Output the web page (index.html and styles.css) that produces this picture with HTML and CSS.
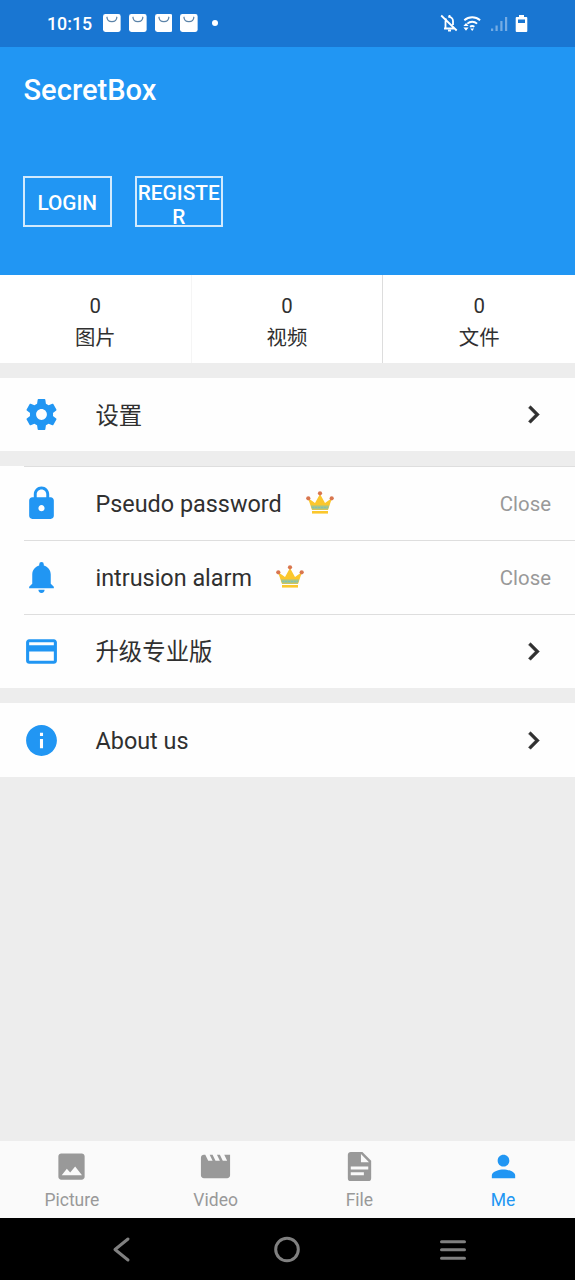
FILE: index.html
```html
<!DOCTYPE html>
<html lang="zh-CN">
<head>
<meta charset="utf-8">
<title>SecretBox</title>
<link rel="stylesheet" href="styles.css">
</head>
<body>
<svg class="defs" width="0" height="0" aria-hidden="true">
  <symbol id="bag" viewBox="0 0 18 18"><rect width="18" height="18" rx="2.500" fill="#fff"/><path d="M4 3.200c.5 6 9.500 6 10 0" fill="none" stroke="#5b83a8" stroke-width="1.300" stroke-linecap="round"/></symbol>
  <symbol id="chevron" viewBox="0 0 24 24"><path d="M8.590 16.580L13.170 12 8.590 7.410 10 6l6 6-6 6z"/></symbol>
  <symbol id="crown" viewBox="0 0 28 24"><path d="M2 7l7 5 5-9 5 9 7-5-4 12H6z" fill="#fbc72c"/><path d="M4.800 14.500h18.400l-1.400 4H6.200z" fill="#a6c48a"/><path d="M6 16.500h16" stroke="#7fc0b4" stroke-width="1.200" stroke-dasharray="2 1"/><path d="M6 20h16v2.600H6z" fill="#fbc72c"/><g fill="#d9764f"><circle cx="2.300" cy="7.300" r="2.100"/><circle cx="14" cy="2.300" r="2.100"/><circle cx="25.700" cy="7.300" r="2.100"/></g></symbol>
</svg>
<div class="screen">
  <div class="status">
    <span class="clock">10:15</span>
    <div class="notices">
      <svg><use href="#bag"/></svg><svg><use href="#bag"/></svg><svg><use href="#bag"/></svg><svg><use href="#bag"/></svg>
    </div>
    <span class="dot"></span>
    <svg class="system" width="90" height="22" viewBox="0 0 90 22">
      <g fill="none" stroke="#fff" stroke-width="1.800">
        <path d="M5 16.500h11M6.500 16V9.500a4 4 0 0 1 1-2.800M9.300 5a4 4 0 0 1 4.700 4v4M10.500 3v2M9 18.700h3M2.200 3.500l15.500 15"/>
        <path d="M25.300 8.200a12 12 0 0 1 15.800 0M28.300 11.600a7.500 7.500 0 0 1 9.800 0M31 14.700a4 4 0 0 1 4.400 0" stroke-width="1.900"/>
      </g>
      <g fill="#fff"><path d="M31.300 16.600h3.800l-1.900 2.300zM24.400 14l2.600-3 2.600 3zM24.400 15.600h5.200L27 18.800z"/><path d="M80 3h5v2h2.300q1 0 1 1v13q0 1-1 1h-9.600q-1 0-1-1V6q0-1 1-1H80zM79 7.500V11h7V7.500z" fill-rule="evenodd"/></g>
      <g fill="#fff" opacity=".4"><path d="M52 16.500h2.200V19H52zM56.500 13.500h2.200V19h-2.200zM61.300 9h2.200v10h-2.200zM66 5h2.200v14H66z"/></g>
    </svg>
  </div>
  <header class="hero">
    <h1>SecretBox</h1>
    <div class="auth"><button>LOGIN</button><button>REGISTER</button></div>
  </header>
  <section class="stats">
    <div><span>0</span><span>图片</span></div>
    <div><span>0</span><span>视频</span></div>
    <div><span>0</span><span>文件</span></div>
  </section>
  <section class="group settings">
    <div class="row">
      <svg class="icon" viewBox="0 0 24 24"><path d="M19.430 12.980c.040-.320.070-.640.070-.980s-.030-.660-.070-.980l2.110-1.650c.190-.150.240-.420.120-.640l-2-3.460c-.120-.220-.390-.300-.610-.220l-2.490 1c-.520-.400-1.080-.730-1.690-.980l-.380-2.650C14.460 2.180 14.250 2 14 2h-4c-.250 0-.460.180-.490.420l-.380 2.650c-.610.250-1.170.590-1.690.980l-2.490-1c-.230-.090-.490 0-.610.220l-2 3.460c-.130.220-.070.490.120.640l2.110 1.650c-.040.320-.070.650-.070.980s.030.660.070.980l-2.110 1.650c-.190.150-.240.420-.120.640l2 3.460c.120.220.390.300.610.220l2.490-1c.520.400 1.080.730 1.690.980l.380 2.650c.030.240.240.420.490.420h4c.250 0 .460-.180.490-.420l.380-2.650c.610-.250 1.170-.590 1.690-.980l2.490 1c.230.090.490 0 .610-.220l2-3.460c.120-.220.070-.490-.120-.640zM12 15.500c-1.930 0-3.500-1.570-3.500-3.500s1.570-3.500 3.500-3.500 3.500 1.570 3.500 3.500-1.570 3.500-3.500 3.500z"/></svg>
      <span class="label">设置</span><svg class="more"><use href="#chevron"/></svg>
    </div>
  </section>
  <section class="group security">
    <div class="row">
      <svg class="icon" viewBox="0 0 24 24"><path d="M18 8h-1V6c0-2.760-2.240-5-5-5S7 3.240 7 6v2H6c-1.100 0-2 .9-2 2v10c0 1.100.9 2 2 2h12c1.100 0 2-.9 2-2V10c0-1.100-.9-2-2-2zm-6 9c-1.100 0-2-.9-2-2s.9-2 2-2 2 .9 2 2-.9 2-2 2zm3.100-9H8.900V6c0-1.710 1.390-3.100 3.100-3.100s3.100 1.390 3.100 3.100z"/></svg>
      <span class="label">Pseudo password</span><svg class="crown"><use href="#crown"/></svg><span class="state">Close</span>
    </div>
    <div class="row">
      <svg class="icon" viewBox="0 0 24 24"><path d="M14 20a2 2 0 0 1-4 0zM12 2a1.500 1.500 0 0 0-1.500 1.500v.7C7.900 4.900 6 7.200 6 10v6l-2 2v1h16v-1l-2-2v-6c0-2.800-1.900-5.100-4.500-5.800v-.7A1.500 1.500 0 0 0 12 2z"/></svg>
      <span class="label">intrusion alarm</span><svg class="crown"><use href="#crown"/></svg><span class="state">Close</span>
    </div>
    <div class="row">
      <svg class="icon" viewBox="0 0 24 24"><path d="M20 4H4c-1.110 0-2 .89-2 2v12c0 1.110.89 2 2 2h16c1.110 0 2-.89 2-2V6c0-1.110-.89-2-2-2zm0 14H4v-6h16zm0-10H4V6h16z"/></svg>
      <span class="label">升级专业版</span><svg class="more"><use href="#chevron"/></svg>
    </div>
  </section>
  <section class="group">
    <div class="row">
      <svg class="icon" viewBox="0 0 24 24"><path d="M12 2C6.480 2 2 6.480 2 12s4.480 10 10 10 10-4.480 10-10S17.520 2 12 2zm1 15h-2v-6h2zm0-8h-2V7h2z"/></svg>
      <span class="label">About us</span><svg class="more"><use href="#chevron"/></svg>
    </div>
  </section>
  <nav class="tabs">
    <a><svg viewBox="0 0 24 24"><path d="M21 19V5c0-1.100-.9-2-2-2H5c-1.100 0-2 .9-2 2v14c0 1.100.9 2 2 2h14c1.100 0 2-.9 2-2zM5.300 18l3.500-4.500 2.300 2.600L14.500 12l4.700 6z"/></svg><span>Picture</span></a>
    <a><svg viewBox="0 0 24 24"><path d="M18 4l2 4h-3l-2-4h-2l2 4h-3l-2-4H8l2 4H7L5 4H4c-1.100 0-1.990.9-1.990 2L2 18c0 1.100.9 2 2 2h16c1.100 0 2-.9 2-2V4z"/></svg><span>Video</span></a>
    <a><svg viewBox="0 0 24 24"><path d="M13 9h5.500L13 3.500zM6 2h8l6 6v12a2 2 0 0 1-2 2H6a2 2 0 0 1-2-2V4c0-1.110.89-2 2-2zm9 16v-2H6v2zm3-4v-2H6v2z" fill-rule="evenodd"/></svg><span>File</span></a>
    <a class="active"><svg viewBox="0 0 24 24"><path d="M12 12c2.210 0 4-1.790 4-4s-1.790-4-4-4-4 1.790-4 4 1.790 4 4 4zm0 2c-2.670 0-8 1.340-8 4v2h16v-2c0-2.660-5.330-4-8-4z"/></svg><span>Me</span></a>
  </nav>
  <div class="navigation">
    <svg viewBox="0 0 30 30"><path d="M21 5L8 15.500 21 26"/></svg>
    <svg viewBox="0 0 30 30"><circle cx="15" cy="15.500" r="11.300"/></svg>
    <svg viewBox="0 0 30 30"><path d="M3.500 7.700h23M3.500 15.800h23M3.500 24.200h23"/></svg>
  </div>
</div>
</body>
</html>
```
FILE: styles.css
```css
* { box-sizing: border-box; }
body { margin: 0; font-family: Roboto, "Noto Sans CJK SC", sans-serif; color: #303030; }
svg { display: block; flex: none; }
.defs { position: absolute; }
.screen { display: flex; flex-direction: column; width: 575px; height: 1280px; background: #ededed; overflow: hidden; }

.status { display: flex; align-items: center; height: 47px; padding: 0 46px 1px 47px; background: #1976d2; color: #fff; flex: none; }
.clock { width: 56px; font-size: 17.800px; font-weight: 500; line-height: 20px; padding-top: 2px; }
.notices { display: flex; gap: 8px; }
.notices svg { width: 17.800px; height: 18px; }
.dot { width: 6px; height: 6px; margin-left: 14px; border-radius: 50%; background: #fff; }
.system { margin-left: auto; }

.hero { height: 228px; padding: 25px 24px 0 23px; background: #2196f3; color: #fff; flex: none; }
h1 { height: 36px; margin: 0; padding-left: .5px; font-size: 29.100px; font-weight: 500; line-height: 36px; }
.auth { display: flex; gap: 23px; margin-top: 68px; }
.auth button { width: 88.500px; height: 51px; padding: 3px 0 0; border: 2px solid rgba(255, 255, 255, .8); background: none; color: #fff; font: 500 20.800px/24px Roboto, sans-serif; overflow-wrap: anywhere; }

.stats { display: grid; grid-template-columns: repeat(3, 1fr); height: 88px; background: #fff; flex: none; }
.stats div { display: flex; flex-direction: column; align-items: center; padding-top: 19px; border-right: 1px solid #f5f5f5; font-size: 20.400px; }
.stats div:nth-child(2) { border-right-color: #ddd; }
.stats div:last-child { border-right: 0; }
.stats span { height: 24px; line-height: 24px; }
.stats span + span { margin-top: 8px; }

.group { margin-top: 15px; background: #fefefe; flex: none; }
.row { display: flex; align-items: center; height: 74px; padding: 0 24px 0 23.300px; position: relative; }
.settings .row { height: 73px; }
.security .row::before { content: ""; position: absolute; left: 24px; right: 0; top: 0; height: 1px; background: #dedede; }
.icon { width: 37px; height: 37px; fill: #2196f3; }
.label { margin-left: 35.200px; font-size: 23.400px; line-height: 28px; padding-top: 2px; }
.crown { width: 28px; height: 24px; margin: 0 0 0 24.500px; }
.more { width: 35px; height: 35px; margin-left: auto; fill: #303030; stroke: #303030; stroke-width: .4; }
.state { margin-left: auto; padding-top: 2px; color: #999; font-size: 20.400px; }

.tabs { display: grid; grid-template-columns: repeat(4, 1fr); height: 77px; margin-top: auto; background: #fafafa; color: #999; flex: none; }
.tabs a { display: flex; flex-direction: column; align-items: center; padding-top: 7.500px; font-size: 17.500px; line-height: 22px; }
.tabs svg { width: 35px; height: 35px; fill: currentColor; }
.tabs span { margin-top: 5.500px; }
.tabs .active { color: #2196f3; }

.navigation { display: flex; justify-content: space-between; align-items: center; height: 62px; padding: 0 107px 0 106.500px; background: #000; flex: none; }
.navigation svg { width: 30px; height: 30px; fill: none; stroke: #808080; stroke-width: 3; stroke-linecap: round; stroke-linejoin: round; }
```
